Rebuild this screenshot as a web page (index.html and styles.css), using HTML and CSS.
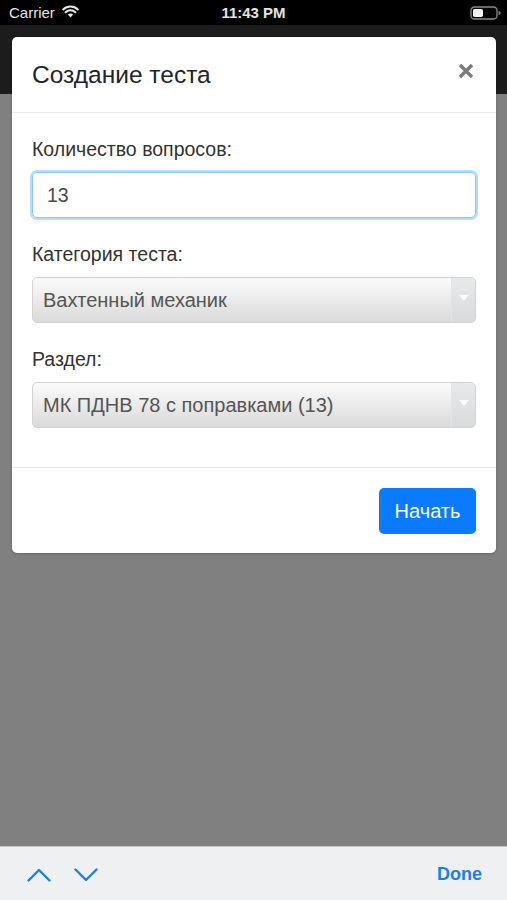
FILE: index.html
```html
<!DOCTYPE html>
<html lang="ru">
<head>
<meta charset="utf-8">
<title>Создание теста</title>
<link rel="stylesheet" href="styles.css">
</head>
<body>
<div class="screen">
  <div class="statusbar">
    <div class="sb-left">
      <span class="carrier">Carrier</span>
      <svg class="wifi" width="17" height="13" viewBox="0 0 17 13">
        <path d="M8.5 12.5 L5.9 9.6 A3.8 3.8 0 0 1 11.1 9.6 Z" fill="#e6e6e6"/>
        <path d="M3.6 7.2 A7 7 0 0 1 13.4 7.2" fill="none" stroke="#e6e6e6" stroke-width="2.1" stroke-linecap="round"/>
        <path d="M1.2 4.4 A10.6 10.6 0 0 1 15.8 4.4" fill="none" stroke="#e6e6e6" stroke-width="2.1" stroke-linecap="round"/>
      </svg>
    </div>
    <div class="sb-time">11:43 PM</div>
    <div class="sb-right">
      <svg class="battery" width="31" height="14" viewBox="0 0 31 14">
        <rect x="1" y="1" width="26" height="12" rx="3.5" fill="none" stroke="#8a8a8a" stroke-width="1.3"/>
        <rect x="3" y="3" width="10" height="8" rx="1.8" fill="#f2f2f2"/>
        <path d="M28.6 5 a2 2 0 0 1 0 4 z" fill="#8a8a8a"/>
      </svg>
    </div>
  </div>
  <div class="navbar"></div>
  <div class="backdrop"></div>
  <div class="toolbar">
    <div class="arrows">
      <svg width="24" height="14" viewBox="0 0 24 14"><path d="M1.5 12.5 L12 2 L22.5 12.5" fill="none" stroke="#1c7fe6" stroke-width="2.4" stroke-linecap="round" stroke-linejoin="round"/></svg>
      <svg width="24" height="14" viewBox="0 0 24 14"><path d="M1.5 1.5 L12 12 L22.5 1.5" fill="none" stroke="#1c7fe6" stroke-width="2.4" stroke-linecap="round" stroke-linejoin="round"/></svg>
    </div>
    <div class="done">Done</div>
  </div>

  <div class="modal">
    <div class="modal-header">
      <h5 class="modal-title">Создание теста</h5>
      <svg class="close" width="16" height="16" viewBox="0 0 16 16"><path d="M2 2 L14 14 M14 2 L2 14" stroke="#7b7b7b" stroke-width="3.4" stroke-linecap="butt"/></svg>
    </div>
    <div class="modal-body">
      <div class="form-group">
        <label class="label">Количество вопросов:</label>
        <div class="input">13</div>
      </div>
      <div class="form-group">
        <label class="label">Категория теста:</label>
        <div class="select">
          <span class="select-text">Вахтенный механик</span>
          <span class="select-arrow"><span class="tri"></span></span>
        </div>
      </div>
      <div class="form-group">
        <label class="label">Раздел:</label>
        <div class="select">
          <span class="select-text">МК ПДНВ 78 с поправками (13)</span>
          <span class="select-arrow"><span class="tri"></span></span>
        </div>
      </div>
    </div>
    <div class="modal-footer">
      <button class="btn">Начать</button>
    </div>
  </div>
</div>
</body>
</html>
```

FILE: styles.css
```css
* { box-sizing: border-box; }
html, body { margin: 0; padding: 0; }
body {
  font-family: "Liberation Sans", Arial, sans-serif;
  background: #808080;
}
.screen {
  position: relative;
  width: 507px;
  height: 900px;
  display: flex;
  flex-direction: column;
  overflow: hidden;
}
.statusbar {
  height: 25px;
  background: #000;
  display: flex;
  align-items: center;
  justify-content: space-between;
  padding: 0 6px 0 9px;
  color: #e4e4e4;
  font-size: 15px;
  position: relative;
}
.sb-left { display: flex; align-items: center; gap: 7px; }
.wifi { margin-top: -2px; }
.sb-time {
  position: absolute;
  left: 0; right: 0;
  text-align: center;
  font-weight: 700;
  pointer-events: none;
}
.sb-right { display: flex; align-items: center; }
.navbar {
  height: 69px;
  background: #1c1c1d;
}
.backdrop {
  flex: 1;
  background: #808080;
}
.toolbar {
  height: 54px;
  background: #eff0f2;
  border-top: 1px solid #c2c3c5;
  display: flex;
  align-items: center;
  justify-content: space-between;
  padding: 0 25px 0 27px;
}
.arrows { display: flex; gap: 23px; align-items: center; padding-top: 2px; }
.done {
  color: #1c7fe6;
  font-weight: 700;
  font-size: 18px;
  padding-top: 2px;
}

.modal {
  position: absolute;
  top: 37px;
  left: 12px;
  width: 484px;
  background: #fff;
  border-radius: 5px;
  box-shadow: 0 1px 3px rgba(0,0,0,0.2);
}
.modal-header {
  height: 76px;
  border-bottom: 1px solid #e9ecef;
  display: flex;
  align-items: center;
  justify-content: space-between;
  padding: 0 22px 0 20px;
}
.modal-title {
  margin: 0;
  font-size: 24.5px;
  font-weight: 400;
  color: #212529;
}
.close { margin-top: -8px; }
.modal-body {
  padding: 20px 20px 20px;
}
.form-group { margin-bottom: 20px; }
.form-group:last-child { margin-bottom: 19px; }
.label {
  display: block;
  font-size: 19.5px;
  line-height: 26px;
  padding-top: 3px;
  color: #333;
  margin-bottom: 10px;
}
.input {
  height: 46px;
  border: 1px solid #8fc2f7;
  border-radius: 5px;
  box-shadow: 0 0 0 2px #bcdafb;
  padding: 0 14px;
  display: flex;
  align-items: center;
  font-size: 19.5px;
  color: #4a4a4a;
}
.select {
  height: 46px;
  border: 1px solid #d3d3d3;
  border-radius: 5px;
  background: linear-gradient(#fbfbfb, #dadada);
  display: flex;
  align-items: stretch;
  overflow: hidden;
}
.select-text {
  flex: 1;
  display: flex;
  align-items: center;
  padding-left: 10px;
  font-size: 20px;
  color: #555;
}
.select-arrow {
  width: 24px;
  background: linear-gradient(#e8e9eb, #d8dadc);
  border-left: 1px solid #e4e4e4;
  display: flex;
  align-items: center;
  justify-content: center;
}
.tri {
  width: 0; height: 0;
  border-left: 5px solid transparent;
  border-right: 5px solid transparent;
  border-top: 6px solid #fafafa;
  margin-bottom: 4px;
}
.modal-footer {
  border-top: 1px solid #e9ecef;
  padding: 20px 20px 19px;
  display: flex;
  justify-content: flex-end;
}
.btn {
  height: 46px;
  width: 97px;
  border: 0;
  border-radius: 5px;
  background: #0a7bff;
  color: #fff;
  font-family: "Liberation Sans", Arial, sans-serif;
  font-size: 20px;
  padding: 0;
}
```
